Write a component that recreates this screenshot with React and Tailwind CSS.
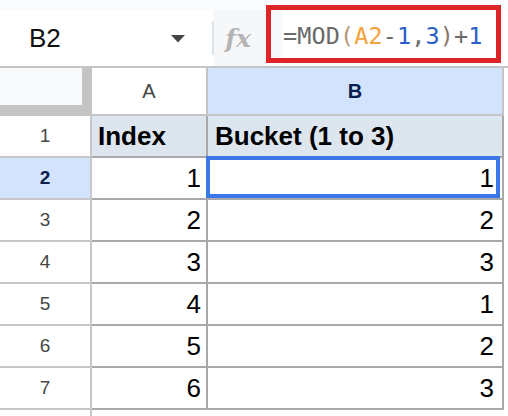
import React from 'react';

const rows = [
  { n: 1, a: 'Index', b: 'Bucket (1 to 3)', head: true },
  { n: 2, a: '1', b: '1', sel: true },
  { n: 3, a: '2', b: '2' },
  { n: 4, a: '3', b: '3' },
  { n: 5, a: '4', b: '1' },
  { n: 6, a: '5', b: '2' },
  { n: 7, a: '6', b: '3' },
];

const Formula = () => (
  <span className="font-['DejaVu_Sans_Mono',monospace] text-[23.5px] leading-none tracking-[0.1px] text-[#6a6a6a]">
    =MOD<span className="text-[#b89878]">(</span>
    <span className="text-[#f2a33a]">A2</span>-<span className="text-[#2b5fc7]">1</span>,
    <span className="text-[#2b5fc7]">3</span>
    <span className="text-[#8a7a6a]">)</span>+<span className="text-[#2b5fc7]">1</span>
  </span>
);

export default function App() {
  return (
    <div className="w-[508px] h-[416px] overflow-hidden bg-white font-['Liberation_Sans',Arial,sans-serif] text-black">
      {/* toolbar */}
      <div className="flex h-[66px] bg-[#f9fbfd]">
        <div className="mt-[10px] flex h-[56px] w-[214px] items-center bg-white">
          <span className="ml-[29px] text-[26px] leading-none text-[#111]">B2</span>
          <svg className="ml-auto mr-[27px] mt-[2px]" width="14" height="8" viewBox="0 0 14 8">
            <path d="M0 0h14L7 7.5z" fill="#444746" />
          </svg>
          <div className="h-[34px] w-[2px] bg-[#dde3ea]" />
        </div>
        <div className="mt-[10px] flex h-[56px] w-[52px] items-center justify-center bg-[#f6f7f8]">
          <span className="-ml-[4px] font-['DejaVu_Serif',serif] text-[25px] font-bold italic leading-none text-[#b4b4b4]">
            fx
          </span>
        </div>
        <div className="mt-[5px] flex h-[58px] w-[235px] border-[5px] border-[#dd2426] bg-white">
          <div className="w-[11px] bg-[#f7f8f9]" />
          <div className="flex items-center pl-[1px] pt-[6px]">
            <Formula />
          </div>
        </div>
        <div className="mt-[10px] h-[56px] flex-1 bg-white" />
      </div>

      {/* column headers */}
      <div className="flex h-[50px] border-t-2 border-[#c4c4c4] bg-[#c4c4c4]">
        <div className="w-[92px]">
          <div className="h-[37px] w-[82px] bg-[#f8f9fa]" />
        </div>
        <div className="flex h-[46px] w-[114px] items-center justify-center bg-white text-[20px] text-[#444746]">
          A
        </div>
        <div className="ml-[2px] flex h-[46px] w-[294px] items-center justify-center bg-[#d3e3fd] text-[20px] font-bold text-[#0b1f4d]">
          B
        </div>
        <div className="ml-[2px] h-[48px] flex-1 bg-white" />
      </div>

      {/* rows */}
      {rows.map((r) => (
        <div key={r.n} className="flex h-[42px]">
          <div
            className={`flex w-[92px] items-center justify-center border-b-2 border-r-2 border-[#c7c7c7] text-[19px] ${
              r.sel ? 'bg-[#d3e3fd] font-bold text-[#0b1f4d]' : 'text-[#444746]'
            }`}
          >
            {r.n}
          </div>
          {r.head ? (
            <>
              <div className="flex w-[116px] items-center border-b-2 border-r-2 border-[#a8a8a8] bg-[#dde5ef] pl-[6px] text-[26px] font-bold">
                {r.a}
              </div>
              <div className="flex w-[296px] items-center border-b-2 border-r-2 border-[#a8a8a8] bg-[#dde5ef] pl-[7px] text-[26px] font-bold">
                {r.b}
              </div>
            </>
          ) : (
            <>
              <div className="flex w-[116px] items-center justify-end border-b-2 border-r-2 border-[#a8a8a8] pr-[5px] text-[26px]">
                {r.a}
              </div>
              <div className="relative flex w-[296px] items-center justify-end border-b-2 border-r-2 border-[#a8a8a8] pr-[8px] text-[26px]">
                {r.sel && (
                  <div className="absolute -left-[2px] -top-[2px] bottom-0 right-[2px] border-[4px] border-[#3b78e7]" />
                )}
                <span className="relative">{r.b}</span>
              </div>
            </>
          )}
          <div className="flex-1" />
        </div>
      ))}
      <div className="flex h-[6px]">
        <div className="w-[92px] border-r-2 border-[#c7c7c7]" />
      </div>
    </div>
  );
}
